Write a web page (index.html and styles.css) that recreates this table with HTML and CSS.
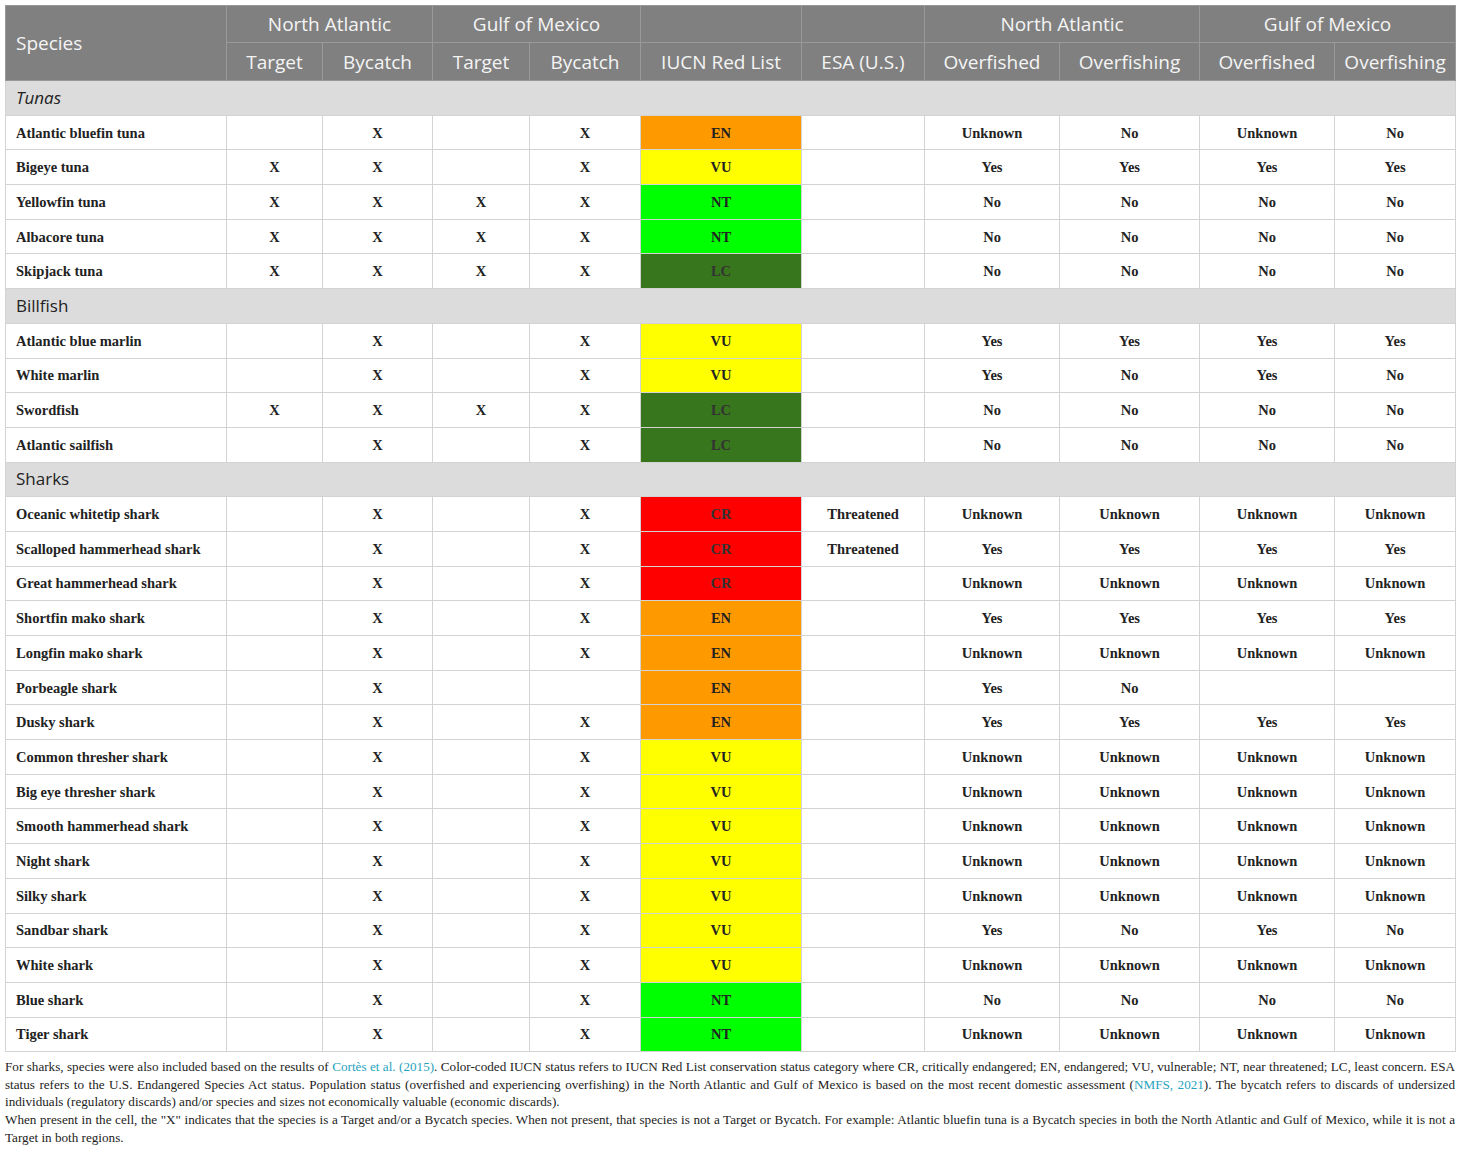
FILE: index.html
```html
<!DOCTYPE html>
<html>
<head>
<meta charset="utf-8">
<link rel="stylesheet" href="styles.css">
</head>
<body>
<table class="tbl">
<colgroup>
<col class="c-sp"><col class="c-t1"><col class="c-b1"><col class="c-t2"><col class="c-b2"><col class="c-iucn"><col class="c-esa"><col class="c-o1"><col class="c-f1"><col class="c-o2"><col class="c-f2">
</colgroup>
<thead>
<tr class="h1">
<th rowspan="2" class="left">Species</th>
<th colspan="2">North Atlantic</th>
<th colspan="2">Gulf of Mexico</th>
<th></th>
<th></th>
<th colspan="2">North Atlantic</th>
<th colspan="2">Gulf of Mexico</th>
</tr>
<tr class="h2">
<th>Target</th><th>Bycatch</th><th>Target</th><th>Bycatch</th><th>IUCN Red List</th><th>ESA (U.S.)</th><th>Overfished</th><th>Overfishing</th><th>Overfished</th><th>Overfishing</th>
</tr>
</thead>
<tbody>
<tr class="cat"><td colspan="11"><em>Tunas</em></td></tr>
<tr><td>Atlantic bluefin tuna</td><td></td><td>X</td><td></td><td>X</td><td class="en">EN</td><td></td><td>Unknown</td><td>No</td><td>Unknown</td><td>No</td></tr>
<tr><td>Bigeye tuna</td><td>X</td><td>X</td><td></td><td>X</td><td class="vu">VU</td><td></td><td>Yes</td><td>Yes</td><td>Yes</td><td>Yes</td></tr>
<tr><td>Yellowfin tuna</td><td>X</td><td>X</td><td>X</td><td>X</td><td class="nt">NT</td><td></td><td>No</td><td>No</td><td>No</td><td>No</td></tr>
<tr><td>Albacore tuna</td><td>X</td><td>X</td><td>X</td><td>X</td><td class="nt">NT</td><td></td><td>No</td><td>No</td><td>No</td><td>No</td></tr>
<tr><td>Skipjack tuna</td><td>X</td><td>X</td><td>X</td><td>X</td><td class="lc">LC</td><td></td><td>No</td><td>No</td><td>No</td><td>No</td></tr>
<tr class="cat"><td colspan="11">Billfish</td></tr>
<tr><td>Atlantic blue marlin</td><td></td><td>X</td><td></td><td>X</td><td class="vu">VU</td><td></td><td>Yes</td><td>Yes</td><td>Yes</td><td>Yes</td></tr>
<tr><td>White marlin</td><td></td><td>X</td><td></td><td>X</td><td class="vu">VU</td><td></td><td>Yes</td><td>No</td><td>Yes</td><td>No</td></tr>
<tr><td>Swordfish</td><td>X</td><td>X</td><td>X</td><td>X</td><td class="lc">LC</td><td></td><td>No</td><td>No</td><td>No</td><td>No</td></tr>
<tr><td>Atlantic sailfish</td><td></td><td>X</td><td></td><td>X</td><td class="lc">LC</td><td></td><td>No</td><td>No</td><td>No</td><td>No</td></tr>
<tr class="cat"><td colspan="11">Sharks</td></tr>
<tr><td>Oceanic whitetip shark</td><td></td><td>X</td><td></td><td>X</td><td class="cr">CR</td><td>Threatened</td><td>Unknown</td><td>Unknown</td><td>Unknown</td><td>Unknown</td></tr>
<tr><td>Scalloped hammerhead shark</td><td></td><td>X</td><td></td><td>X</td><td class="cr">CR</td><td>Threatened</td><td>Yes</td><td>Yes</td><td>Yes</td><td>Yes</td></tr>
<tr><td>Great hammerhead shark</td><td></td><td>X</td><td></td><td>X</td><td class="cr">CR</td><td></td><td>Unknown</td><td>Unknown</td><td>Unknown</td><td>Unknown</td></tr>
<tr><td>Shortfin mako shark</td><td></td><td>X</td><td></td><td>X</td><td class="en">EN</td><td></td><td>Yes</td><td>Yes</td><td>Yes</td><td>Yes</td></tr>
<tr><td>Longfin mako shark</td><td></td><td>X</td><td></td><td>X</td><td class="en">EN</td><td></td><td>Unknown</td><td>Unknown</td><td>Unknown</td><td>Unknown</td></tr>
<tr><td>Porbeagle shark</td><td></td><td>X</td><td></td><td></td><td class="en">EN</td><td></td><td>Yes</td><td>No</td><td></td><td></td></tr>
<tr><td>Dusky shark</td><td></td><td>X</td><td></td><td>X</td><td class="en">EN</td><td></td><td>Yes</td><td>Yes</td><td>Yes</td><td>Yes</td></tr>
<tr><td>Common thresher shark</td><td></td><td>X</td><td></td><td>X</td><td class="vu">VU</td><td></td><td>Unknown</td><td>Unknown</td><td>Unknown</td><td>Unknown</td></tr>
<tr><td>Big eye thresher shark</td><td></td><td>X</td><td></td><td>X</td><td class="vu">VU</td><td></td><td>Unknown</td><td>Unknown</td><td>Unknown</td><td>Unknown</td></tr>
<tr><td>Smooth hammerhead shark</td><td></td><td>X</td><td></td><td>X</td><td class="vu">VU</td><td></td><td>Unknown</td><td>Unknown</td><td>Unknown</td><td>Unknown</td></tr>
<tr><td>Night shark</td><td></td><td>X</td><td></td><td>X</td><td class="vu">VU</td><td></td><td>Unknown</td><td>Unknown</td><td>Unknown</td><td>Unknown</td></tr>
<tr><td>Silky shark</td><td></td><td>X</td><td></td><td>X</td><td class="vu">VU</td><td></td><td>Unknown</td><td>Unknown</td><td>Unknown</td><td>Unknown</td></tr>
<tr><td>Sandbar shark</td><td></td><td>X</td><td></td><td>X</td><td class="vu">VU</td><td></td><td>Yes</td><td>No</td><td>Yes</td><td>No</td></tr>
<tr><td>White shark</td><td></td><td>X</td><td></td><td>X</td><td class="vu">VU</td><td></td><td>Unknown</td><td>Unknown</td><td>Unknown</td><td>Unknown</td></tr>
<tr><td>Blue shark</td><td></td><td>X</td><td></td><td>X</td><td class="nt">NT</td><td></td><td>No</td><td>No</td><td>No</td><td>No</td></tr>
<tr><td>Tiger shark</td><td></td><td>X</td><td></td><td>X</td><td class="nt">NT</td><td></td><td>Unknown</td><td>Unknown</td><td>Unknown</td><td>Unknown</td></tr>
</tbody>
</table>
<div class="notes">
<p>For sharks, species were also included based on the results of <a class="ref">Cortès et al. (2015)</a>. Color-coded IUCN status refers to IUCN Red List conservation status category where CR, critically endangered; EN, endangered; VU, vulnerable; NT, near threatened; LC, least concern. ESA status refers to the U.S. Endangered Species Act status. Population status (overfished and experiencing overfishing) in the North Atlantic and Gulf of Mexico is based on the most recent domestic assessment (<a class="ref">NMFS, 2021</a>). The bycatch refers to discards of undersized individuals (regulatory discards) and/or species and sizes not economically valuable (economic discards).</p>
<p>When present in the cell, the "X" indicates that the species is a Target and/or a Bycatch species. When not present, that species is not a Target or Bycatch. For example: Atlantic bluefin tuna is a Bycatch species in both the North Atlantic and Gulf of Mexico, while it is not a Target in both regions.</p>
</div>
</body>
</html>
```
FILE: styles.css
```css
html, body { margin: 0; padding: 0; background: #fff; }
body { padding: 5px; }
.tbl {
  width: 1450px;
  border-collapse: collapse;
  table-layout: fixed;
}
.c-sp { width: 221px; }
.c-t1 { width: 96px; }
.c-b1 { width: 110px; }
.c-t2 { width: 97px; }
.c-b2 { width: 111px; }
.c-iucn { width: 161px; }
.c-esa { width: 123px; }
.c-o1 { width: 135px; }
.c-f1 { width: 140px; }
.c-o2 { width: 135px; }
.c-f2 { width: 121px; }
thead th {
  background: #808080;
  color: #f4f4f4;
  font-family: "Open Sans", sans-serif;
  font-weight: 400;
  font-size: 19px;
  line-height: 24px;
  text-align: center;
  border: 1px solid #999;
  padding: 0 2px;
}
thead th.left { text-align: left; padding-left: 10px; }
.h1 th { height: 36px; }
.h2 th { height: 37px; }
tbody td {
  border: 1px solid #d3d3d3;
  height: 33.7px;
  padding: 0 4px;
  text-align: center;
  font-family: "Liberation Serif", serif;
  font-weight: 700;
  font-size: 14.5px;
  line-height: 18px;
  color: #222;
}
tbody td:first-child { text-align: left; padding-left: 10px; }
tbody tr.cat td {
  background: #dcdcdc;
  font-family: "Open Sans", sans-serif;
  font-weight: 400;
  font-size: 17px;
  color: #222;
}
.en { background: #ff9900; }
.vu { background: #ffff00; }
.nt { background: #00ff00; }
.lc { background: #38761d; color: #333 !important; }
.cr { background: #ff0000; color: #333 !important; }
.notes {
  font-family: "Liberation Serif", serif;
  font-size: 13.15px;
  line-height: 17.6px;
  color: #222;
  margin-top: 6px;
  text-align: justify;
}
.notes p { margin: 0; }
.ref { color: #1fa3c0; }
```
